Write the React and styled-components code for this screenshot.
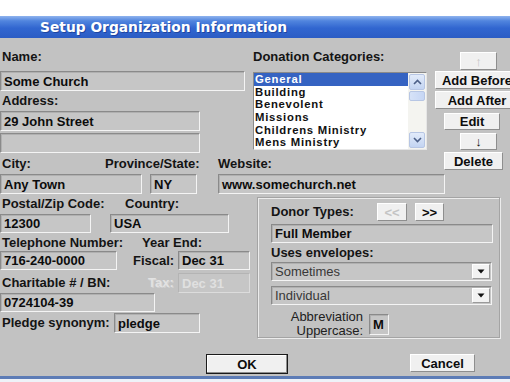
import React from 'react';
import styled, { createGlobalStyle, css } from 'styled-components';

const Global = createGlobalStyle`
  html, body { margin: 0; padding: 0; background: #fff; }
  body { font-family: "Liberation Sans", Arial, sans-serif; }
  * { box-sizing: border-box; }
`;

const Screen = styled.div`
  width: 510px;
  height: 382px;
  overflow: hidden;
  background: #eef2f8;
  padding-top: 16px;
  display: flex;
  flex-direction: column;
  box-shadow: inset 0 16px 0 #fff;
`;

const TitleBar = styled.div`
  flex: none;
  height: 22px;
  background: linear-gradient(#8fb3ee 0%, #5185de 22%, #3166d0 55%, #2b5cc4 100%);
  color: #fff;
  font: bold 13.8px "DejaVu Sans", Verdana, sans-serif;
  padding-left: 40px;
  display: flex;
  align-items: center;
  text-shadow: 1px 1px 0 rgba(20, 50, 130, 0.6);
  white-space: nowrap;
`;

const Body = styled.div`
  flex: none;
  height: 338px;
  background: #c2c2c2;
  display: flex;
  flex-direction: column;
`;

const BottomEdge = styled.div`
  flex: none;
  height: 3px;
  background: #5d7cb6;
`;

const Upper = styled.div`
  display: grid;
  grid-template-columns: 253px 182px 75px;
  grid-template-rows: 115px 21px 20px;
`;

const Col = styled.div`
  display: flex;
  flex-direction: column;
  padding-top: ${p => p.$pt || 0}px;
`;

const TopLeft = styled(Col)`
  grid-column: 1;
  grid-row: 1;
`;

const TopRight = styled(Col)`
  grid-column: 2;
  grid-row: 1;
`;

const ButtonCol = styled(Col)`
  grid-column: 3;
  grid-row: 1 / span 2;
  align-items: flex-start;
`;

const LabelRow = styled.div`
  display: flex;
  align-items: center;
  height: ${p => p.$h || 14}px;
  margin-top: ${p => p.$mt || 0}px;
  grid-column: ${p => p.$span || 'auto'};
`;

const FieldRow = styled.div`
  display: flex;
  align-items: center;
  margin-top: ${p => p.$mt || 0}px;
  grid-column: ${p => p.$span || 'auto'};
`;

const Label = styled.div`
  flex: none;
  width: ${p => (p.$w ? `${p.$w}px` : 'auto')};
  margin-left: ${p => p.$ml || 0}px;
  padding-left: ${p => (p.$pl === undefined ? 2 : p.$pl)}px;
  height: 14px;
  line-height: 14px;
  font-weight: bold;
  font-size: 13px;
  color: ${p => (p.$disabled ? '#e2e2e2' : '#141414')};
  text-shadow: ${p => (p.$disabled ? '1px 1px 0 #d0d0d0' : 'none')};
  white-space: nowrap;
`;

const Field = styled.div`
  flex: none;
  width: ${p => p.$w}px;
  height: ${p => p.$h || 20}px;
  margin-top: ${p => p.$mt || 0}px;
  margin-left: ${p => p.$ml || 0}px;
  background: #c6c6c6;
  border: 1px solid;
  border-color: ${p => (p.$disabled ? '#b4b4b4 #dcdcdc #dcdcdc #b4b4b4' : '#8a8a8a #f4f4f4 #f4f4f4 #8a8a8a')};
  box-shadow: ${p => (p.$disabled ? 'none' : 'inset 1px 1px 0 #b0b0b0')};
  padding-left: 3px;
  display: flex;
  align-items: center;
  font-weight: bold;
  font-size: 13px;
  color: ${p => (p.$disabled ? '#e0e0e0' : '#0c0c0c')};
  white-space: nowrap;
  overflow: hidden;
`;

const List = styled.div`
  margin-top: 8px;
  width: 174px;
  height: 78px;
  background: #fff;
  border: 1px solid;
  border-color: #8a8a8a #e6e6e6 #e6e6e6 #8a8a8a;
  display: flex;
`;

const Items = styled.div`
  flex: 1;
  display: flex;
  flex-direction: column;
  overflow: hidden;
`;

const Item = styled.div`
  flex: none;
  height: 12.66px;
  line-height: 12.66px;
  padding-left: 1px;
  font-weight: bold;
  font-size: 11.3px;
  letter-spacing: 0.75px;
  white-space: nowrap;
  color: ${p => (p.$sel ? '#fff' : '#111')};
  background: ${p => (p.$sel ? '#3563c2' : 'transparent')};
`;

const Scroll = styled.div`
  flex: none;
  width: 18px;
  background: #f4f4f0;
  display: flex;
  flex-direction: column;
  padding: 1px 0;
`;

const ScrollBtn = styled.div`
  height: 16px;
  margin: 0 1px;
  border: 1px solid #b7c6e4;
  border-radius: 2px;
  background: linear-gradient(#e2ebfa, #c3d4f2);
  display: flex;
  align-items: center;
  justify-content: center;
`;

const Thumb = styled.div`
  height: 10px;
  margin: 1px 1px 0;
  border: 1px solid #b7c6e4;
  border-radius: 2px;
  background: linear-gradient(90deg, #d6e2f8, #c6d6f4);
`;

const Spacer = styled.div`
  flex: 1;
`;

const Btn = styled.div`
  flex: none;
  width: ${p => p.$w}px;
  height: ${p => p.$h || 18}px;
  margin-top: ${p => p.$mt || 0}px;
  margin-left: ${p => p.$ml || 0}px;
  background: #f0f0f0;
  border: 1px solid;
  border-color: #ffffff #8e8e8e #8e8e8e #ffffff;
  display: flex;
  align-items: center;
  justify-content: center;
  font-weight: bold;
  font-size: 13px;
  white-space: nowrap;
  color: ${p => (p.$disabled ? '#c4c4c4' : '#0c0c0c')};
  ${p =>
    p.$default &&
    css`
      border: 1px solid #1a1a1a;
      box-shadow: inset -1px -1px 0 #8e8e8e, inset 1px 1px 0 #fff;
    `}
`;

const Lower = styled.div`
  display: flex;
  height: 144px;
`;

const LowerLeft = styled(Col)`
  width: 257px;
  flex: none;
`;

const Panel = styled.div`
  margin-top: 3px;
  width: 243px;
  height: 141px;
  border: 1px solid #a4a4a4;
  box-shadow: inset 1px 1px 0 #ececec, 1px 1px 0 #ececec;
  padding: 0 7px 0 13px;
  display: flex;
  flex-direction: column;
`;

const Select = styled(Field)`
  font-weight: normal;
  color: #383838;
  justify-content: space-between;
  padding-right: 1px;
`;

const DropBtn = styled.div`
  width: 18px;
  height: 15px;
  background: #f2f2f2;
  border: 1px solid;
  border-color: #fff #9a9a9a #9a9a9a #fff;
  display: flex;
  align-items: center;
  justify-content: center;
`;

const Caption = styled.div`
  width: ${p => p.$w}px;
  text-align: right;
  font-size: 13px;
  line-height: 14px;
  color: #202020;
`;

const Footer = styled.div`
  display: flex;
  align-items: flex-start;
  padding-top: 16px;
`;

const Chevron = ({ up }) => (
  <svg width="9" height="6" viewBox="0 0 9 6">
    <path d={up ? 'M1 5 L4.5 1.5 L8 5' : 'M1 1 L4.5 4.5 L8 1'} fill="none" stroke="#4d6088" strokeWidth="1.6" />
  </svg>
);

const Tri = () => (
  <svg width="8" height="5" viewBox="0 0 8 5">
    <path d="M0.5 0.5 H7.5 L4 4.5 Z" fill="#111" />
  </svg>
);

const categories = ['General', 'Building', 'Benevolent', 'Missions', 'Childrens Ministry', 'Mens Ministry'];

export default function App() {
  return (
    <>
      <Global />
      <Screen>
        <TitleBar>Setup Organization Information</TitleBar>
        <Body>
          <Upper>
            <TopLeft $pt={12}>
              <Label>Name:</Label>
              <Field $w={245} $mt={7}>Some Church</Field>
              <LabelRow $mt={3}>
                <Label>Address:</Label>
              </LabelRow>
              <Field $w={200} $mt={3}>29 John Street</Field>
              <Field $w={200} $mt={2} />
            </TopLeft>
            <TopRight $pt={12}>
              <Label $pl={0}>Donation Categories:</Label>
              <List>
                <Items>
                  {categories.map((c, i) => (
                    <Item key={c} $sel={i === 0}>{c}</Item>
                  ))}
                </Items>
                <Scroll>
                  <ScrollBtn><Chevron up /></ScrollBtn>
                  <Thumb />
                  <Spacer />
                  <ScrollBtn><Chevron /></ScrollBtn>
                </Scroll>
              </List>
            </TopRight>
            <ButtonCol $pt={14}>
              <Btn $w={37} $ml={25} $disabled>↑</Btn>
              <Btn $w={84} $mt={1}>Add Before</Btn>
              <Btn $w={84} $mt={2}>Add After</Btn>
              <Btn $w={56} $ml={9} $mt={4} $h={17}>Edit</Btn>
              <Btn $w={37} $ml={25} $mt={3} $h={17}>↓</Btn>
              <Btn $w={59} $ml={9} $mt={2}>Delete</Btn>
            </ButtonCol>
            <LabelRow $h={21} $span="1 / span 2">
              <Label $w={105}>City:</Label>
              <Label $w={113} $pl={0}>Province/State:</Label>
              <Label $pl={0}>Website:</Label>
            </LabelRow>
            <FieldRow $span="1 / -1">
              <Field $w={142}>Any Town</Field>
              <Field $w={47} $ml={8}>NY</Field>
              <Field $w={227} $ml={21}>www.somechurch.net</Field>
            </FieldRow>
          </Upper>
          <Lower>
            <LowerLeft>
              <LabelRow $mt={3}>
                <Label $w={125}>Postal/Zip Code:</Label>
                <Label $pl={0}>Country:</Label>
              </LabelRow>
              <FieldRow $mt={3}>
                <Field $w={91} $h={19}>12300</Field>
                <Field $w={119} $h={19} $ml={19}>USA</Field>
              </FieldRow>
              <LabelRow $mt={3}>
                <Label $w={142}>Telephone Number:</Label>
                <Label $pl={0}>Year End:</Label>
              </LabelRow>
              <FieldRow $mt={1}>
                <Field $w={117} $h={19}>716-240-0000</Field>
                <Label $w={45} $ml={16} $pl={0}>Fiscal:</Label>
                <Field $w={72} $h={19}>Dec 31</Field>
              </FieldRow>
              <FieldRow $mt={3}>
                <Label $w={148}>Charitable # / BN:</Label>
                <Label $w={30} $pl={0} $disabled>Tax:</Label>
                <Field $w={72} $disabled>Dec 31</Field>
              </FieldRow>
              <Field $w={155} $h={19}>0724104-39</Field>
              <FieldRow $mt={1}>
                <Label $w={114}>Pledge synonym:</Label>
                <Field $w={86}>pledge</Field>
              </FieldRow>
            </LowerLeft>
            <Panel>
              <FieldRow $mt={5}>
                <Label $w={106} $pl={0}>Donor Types:</Label>
                <Btn $w={30} $disabled>&lt;&lt;</Btn>
                <Btn $w={29} $ml={8}>&gt;&gt;</Btn>
              </FieldRow>
              <Field $w={222} $h={19} $mt={3}>Full Member</Field>
              <LabelRow $mt={3}>
                <Label $pl={0}>Uses envelopes:</Label>
              </LabelRow>
              <Select $w={221} $h={19} $mt={2}>
                Sometimes
                <DropBtn><Tri /></DropBtn>
              </Select>
              <Select $w={221} $h={19} $mt={5}>
                Individual
                <DropBtn><Tri /></DropBtn>
              </Select>
              <FieldRow $mt={5}>
                <Caption $w={92}>
                  Abbreviation
                  <br />
                  Uppercase:
                </Caption>
                <Field $w={20} $h={21} $ml={6}>M</Field>
              </FieldRow>
            </Panel>
          </Lower>
          <Footer>
            <Btn $w={82} $h={20} $ml={206} $default>OK</Btn>
            <Btn $w={65} $ml={122}>Cancel</Btn>
          </Footer>
        </Body>
        <BottomEdge />
      </Screen>
    </>
  );
}
